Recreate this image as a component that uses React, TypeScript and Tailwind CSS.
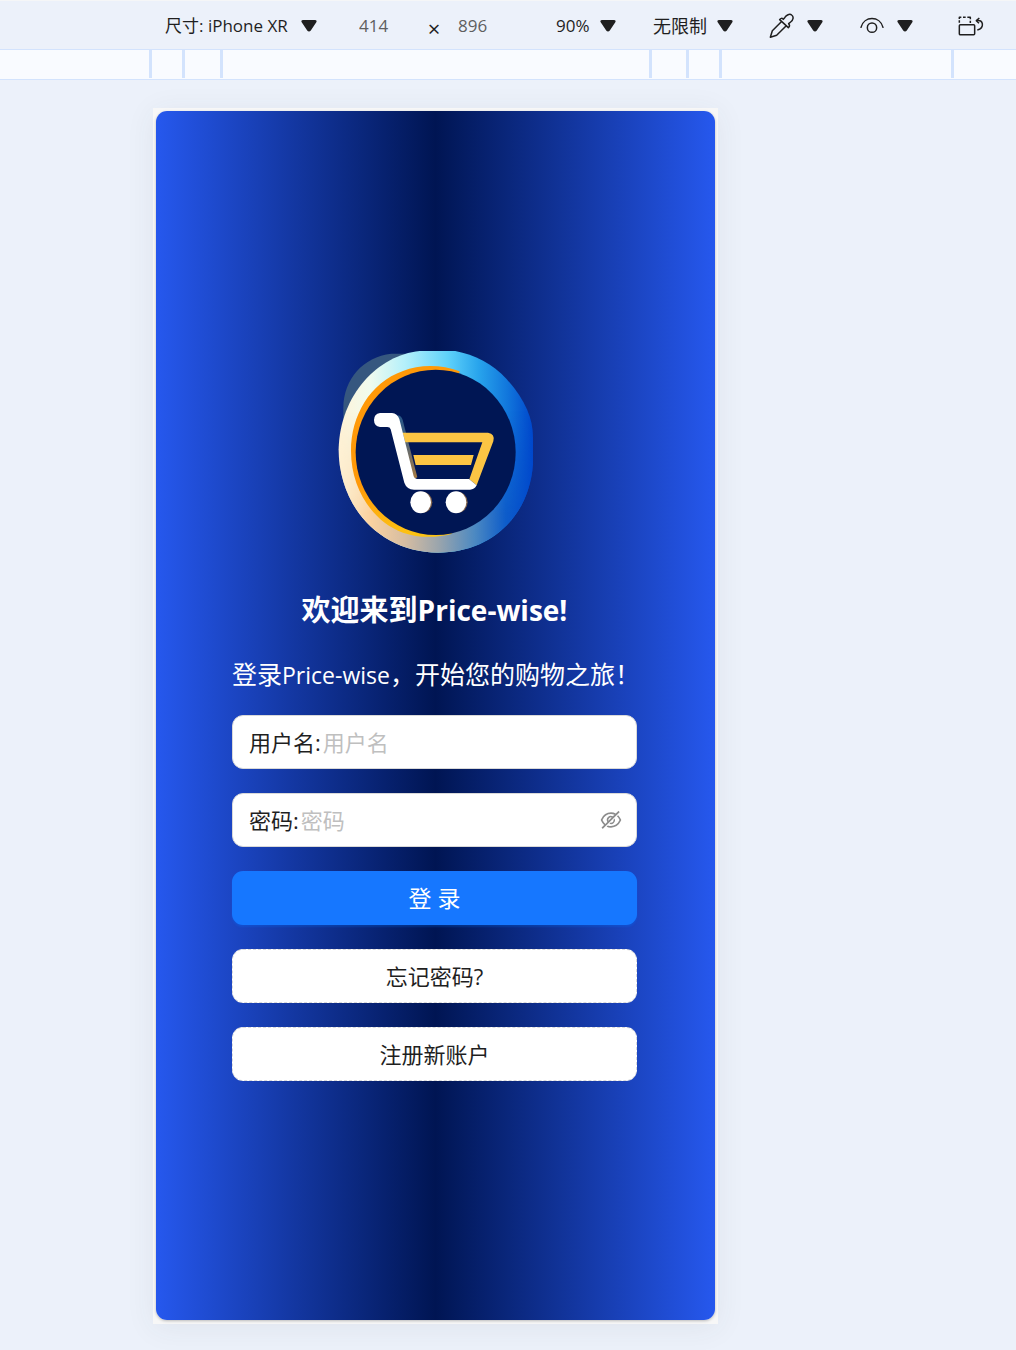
import React, { useState } from "react";
import { AiOutlineEye, AiOutlineEyeInvisible } from "react-icons/ai";

const sans = "font-['Open_Sans','Noto_Sans_CJK_SC',sans-serif]";

function Caret() {
  return (
    <svg width="16" height="12" viewBox="0 0 16 12" className="pointer-events-none shrink-0" aria-hidden="true">
      <path d="M2 0h12c1.600 0 2 1.200 1.300 2.200L9.800 10.600c-.9 1.300-2.700 1.300-3.600 0L.7 2.200C0 1.200.4 0 2 0z" fill="#1f1f1f" />
    </svg>
  );
}

function Picker({ label, value, className }: { label: string; value: string; className: string }) {
  return (
    <div className={`relative flex h-6 shrink-0 items-center justify-end ${className}`}>
      <select
        aria-label={label}
        defaultValue={value}
        className="absolute inset-0 w-full appearance-none bg-transparent leading-6 outline-none"
      >
        <option>{value}</option>
      </select>
      <Caret />
    </div>
  );
}

function Dropper() {
  return (
    <svg width="26" height="26" viewBox="0 0 78 78" fill="none" stroke="#1f1f1f" strokeWidth="4.500" strokeLinejoin="round" strokeLinecap="round" aria-hidden="true">
      <path d="M37 26L10 53L4 73L23 67L51 39" />
      <path d="M32 20c3-5 7-5 11-1l4-5C52 6 62 1 68 6c7 5 5 15-3 21l-6 5c4 5 4 8-1 12z" />
    </svg>
  );
}

function Vision() {
  return (
    <svg width="24" height="18" viewBox="0 0 72 54" fill="none" stroke="#1f1f1f" strokeWidth="4.500" strokeLinecap="round" aria-hidden="true">
      <path d="M3 31C12 -4 60 -4 69 31" />
      <circle cx="36" cy="32" r="14" />
    </svg>
  );
}

function Rotate() {
  return (
    <svg width="26" height="20" viewBox="0 0 78 60" fill="none" stroke="#1f1f1f" strokeWidth="4.500" strokeLinejoin="round" aria-hidden="true">
      <rect x="4" y="26" width="46" height="30" rx="3" />
      <path d="M4 20v-7M4 9V4h6M15 4h8M28 4h9v6M37 14v7" />
      <path d="M56 14c20-6 25 22 2 28" />
      <path d="M64 6l-9 8 8 8" />
    </svg>
  );
}

function Logo() {
  const ring =
    "M285 45H392C450 56 505 85 545 128C600 190 625 245 625 305V385C614 540 500 650 340 650C170 650 42 515 42 340C46 175 160 58 285 45Z";
  return (
    <svg width="200" height="204" viewBox="31 42 600 612" role="img" aria-label="Price-wise">
      <defs>
        <linearGradient id="ringTop" gradientUnits="userSpaceOnUse" x1="42" y1="0" x2="625" y2="0">
          <stop offset="0" stopColor="#fff3d8" />
          <stop offset="0.16" stopColor="#f0fbee" />
          <stop offset="0.34" stopColor="#b4f0fb" />
          <stop offset="0.56" stopColor="#5fd2fa" />
          <stop offset="0.72" stopColor="#28a4ec" />
          <stop offset="0.87" stopColor="#1176dc" />
          <stop offset="1" stopColor="#0047cc" />
        </linearGradient>
        <linearGradient id="ringBottom" gradientUnits="userSpaceOnUse" x1="42" y1="0" x2="625" y2="0">
          <stop offset="0" stopColor="#feedcd" />
          <stop offset="0.16" stopColor="#fbd2a0" />
          <stop offset="0.34" stopColor="#d6bda2" />
          <stop offset="0.52" stopColor="#98a4ad" />
          <stop offset="0.7" stopColor="#4c89c2" />
          <stop offset="0.86" stopColor="#0d5cca" />
          <stop offset="1" stopColor="#0047cc" />
        </linearGradient>
        <linearGradient id="fade" x1="0" y1="0" x2="0" y2="1">
          <stop offset="0.3" stopColor="#000" />
          <stop offset="0.8" stopColor="#fff" />
        </linearGradient>
        <mask id="lower" maskUnits="userSpaceOnUse" x="31" y="42" width="600" height="612">
          <rect x="31" y="42" width="600" height="612" fill="url(#fade)" />
        </mask>
        <linearGradient id="gold" x1="0" y1="0" x2="0" y2="1">
          <stop offset="0.7" stopColor="#ff9908" />
          <stop offset="1" stopColor="#fcc414" />
        </linearGradient>
        <linearGradient id="pole" x1="0" y1="0" x2="0" y2="1">
          <stop offset="0" stopColor="#265788" />
          <stop offset="0.35" stopColor="#4b637c" />
          <stop offset="1" stopColor="#a87b42" />
        </linearGradient>
      </defs>
      <path d="M250 53H200C115 62 57 130 56 215V250L130 170Z" fill="#36577f" />
      <path d={ring} fill="url(#ringTop)" />
      <path d={ring} fill="url(#ringBottom)" mask="url(#lower)" />
      <path d="M405 106C350 85 285 85 235 105C135 140 79 240 79 345C79 455 140 555 235 590C280 606 335 606 380 594L400 560V130Z" fill="url(#gold)" />
      <ellipse cx="333" cy="349" rx="240" ry="248" fill="#001654" />
      <path d="M218 238Q230 238 234 252L278 424L262 432Z" fill="url(#pole)" />
      <path d="M234 290H490Q512 293 506 316L456 448L434 430L473 319H242Z" fill="#fcc544" />
      <path d="M266 357H447L439 387H273Z" fill="#fcc544" />
      <path d="M166 231H202Q218 232 224 249L267 421Q269 429 277 429H433L456 448Q449 461 436 461H268Q246 460 239 440L198 280Q196 273 188 273H166Q148 270 148 252Q148 234 166 231Z" fill="#fff" />
      <ellipse cx="292" cy="499" rx="31" ry="32" fill="#80634c" />
      <ellipse cx="398" cy="499" rx="31" ry="32" fill="#80634c" />
      <ellipse cx="288" cy="499" rx="31" ry="33" fill="#fff" />
      <ellipse cx="394" cy="499" rx="31" ry="33" fill="#fff" />
    </svg>
  );
}

function Tick({ gap }: { gap: string }) {
  return <span className={`h-7 w-[3px] shrink-0 bg-[#d3e3fd] ${gap}`} />;
}

const field =
  "flex h-[54px] w-full items-center gap-[2px] rounded-[11px] border border-[#d9d9d9] bg-white px-4 text-[22px] leading-8 text-[#1f1f1f]";
const fieldInput = "min-w-0 flex-1 bg-transparent outline-none placeholder:text-[#bfbfbf]";
const plainButton =
  "h-[54px] w-full rounded-[11px] border border-dashed border-[#d9d9d9] bg-white text-[22px] leading-8 text-[#1f1f1f]";

export default function App() {
  const [visible, setVisible] = useState(false);
  return (
    <div className={`flex min-h-screen flex-col bg-[#ecf1fa] text-[#1f1f1f] ${sans}`}>
      <header className="flex h-[50px] items-center overflow-hidden border-t border-b border-t-[#f5f6f7] border-b-[#d3e3fd] pt-[2px] pl-[165px] text-[17px] leading-6">
        <Picker label="尺寸" value="尺寸: iPhone XR" className="w-[152px]" />
        <input aria-label="宽度" defaultValue="414" className="ml-[42px] w-[65px] shrink-0 bg-transparent text-[#5f5f5f] outline-none" />
        <span className="w-5 shrink-0 pt-1 text-center text-[22px]">×</span>
        <input aria-label="高度" defaultValue="896" className="ml-[14px] w-[62px] shrink-0 bg-transparent text-[#5f5f5f] outline-none" />
        <Picker label="缩放" value="90%" className="ml-[36px] w-[60px]" />
        <Picker label="节流" value="无限制" className="ml-[37px] w-[80px] text-[18px]" />
        <button aria-label="取色" className="ml-[36px] flex shrink-0 items-center gap-3">
          <Dropper />
          <Caret />
        </button>
        <button aria-label="视觉" className="ml-[37px] flex shrink-0 items-center gap-[13px]">
          <Vision />
          <Caret />
        </button>
        <button aria-label="旋转" className="ml-[45px] shrink-0">
          <Rotate />
        </button>
      </header>

      <div className="flex h-[30px] overflow-hidden border-b border-[#d3e3fd] bg-[#f9fbff]">
        <div className="flex flex-1 justify-center">
          <Tick gap="" />
          <Tick gap="ml-[30px]" />
          <Tick gap="ml-[35px]" />
          <Tick gap="ml-[426px]" />
          <Tick gap="ml-[34px]" />
          <Tick gap="ml-[30px]" />
        </div>
        <div className="flex w-[145px] shrink-0 justify-end pr-[62px]">
          <Tick gap="" />
        </div>
      </div>

      <main className="flex flex-1 justify-center pt-7 pr-[145px] pb-[26px]">
        <div className="flex w-full max-w-[565px] bg-[#f7f7f7] p-[3px] pb-1 shadow-[0_4px_28px_rgba(60,64,67,0.07)]">
          <section className="flex flex-1 flex-col items-center justify-center rounded-[11px] bg-[linear-gradient(to_right,#2658ee,#001553_50%,#2658ee)] pr-[26px] pl-6 shadow-[0_1px_3px_rgba(0,0,0,0.25)]">
            <Logo />
            <h1 className="mt-9 text-[29px] leading-10 font-bold whitespace-nowrap text-white">
              欢迎来到<span className="text-[28px]">Price-wise!</span>
            </h1>
            <form className="flex w-full max-w-[405px] flex-col gap-6" onSubmit={(e) => e.preventDefault()}>
              <p className="mt-[26px] -mb-[2px] text-[25px] leading-9 whitespace-nowrap text-white">
                登录<span className="text-[23px]">Price-wise</span>，开始您的购物之旅！
              </p>
              <label className={field}>
                用户名:
                <input className={fieldInput} placeholder="用户名" autoComplete="username" />
              </label>
              <div className={field}>
                <label htmlFor="password">密码:</label>
                <input id="password" type={visible ? "text" : "password"} className={fieldInput} placeholder="密码" autoComplete="current-password" />
                <button type="button" aria-label="显示密码" onClick={() => setVisible(!visible)} className="-mr-[3px] text-[#8c8c8c]">
                  {visible ? <AiOutlineEye size={24} /> : <AiOutlineEyeInvisible size={24} />}
                </button>
              </div>
              <button type="submit" className="h-[54px] w-full rounded-[11px] bg-[#1677ff] text-[23px] leading-8 text-white shadow-[0_2px_2px_rgba(5,115,255,0.25)]">
                登 录
              </button>
              <button type="button" className={plainButton}>
                忘记密码?
              </button>
              <button type="button" className={plainButton}>
                注册新账户
              </button>
            </form>
          </section>
        </div>
      </main>
    </div>
  );
}
